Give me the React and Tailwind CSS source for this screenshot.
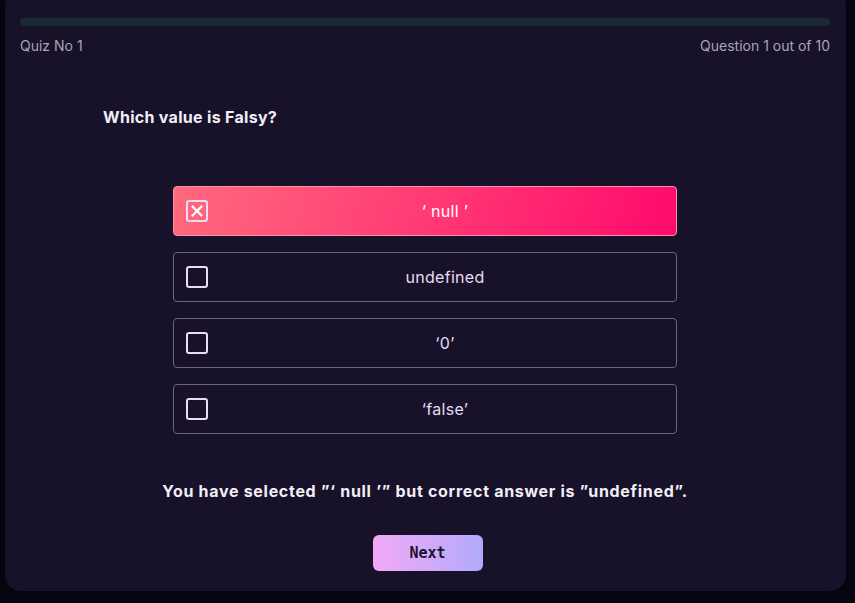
import React, { useState } from 'react';

const options = ["‘ null ’", 'undefined', '‘0’', '‘false’'];

function CheckBox({ checked }) {
  return (
    <span className="w-[22px] h-[22px] rounded-[3px] border-[2.5px] border-[#eadcfb] flex items-center justify-center shrink-0">
      {checked && (
        <svg viewBox="0 0 16 16" className="w-[14px] h-[14px]" fill="none" stroke="#ffffff" strokeWidth={2.6} strokeLinecap="square">
          <path d="M3 3l10 10M13 3L3 13" />
        </svg>
      )}
    </span>
  );
}

export default function App() {
  const [selected] = useState(0);

  return (
    <div className="w-[855px] h-[603px] bg-[#05050f] overflow-hidden" style={{ fontFamily: 'Inter, "Liberation Sans", sans-serif' }}>
      <div className="ml-[5px] w-[841px] mt-[-10px] h-[601px] bg-[#18112a] rounded-2xl pl-[15px] pr-[16px] pt-[28px] flex flex-col">
        <div className="h-2 rounded-full bg-[#1a2a33]"></div>
        <div className="flex justify-between mt-[10px] text-[14px] text-[#aaa4b4] leading-5">
          <span>Quiz No 1</span>
          <span>Question 1 out of 10</span>
        </div>

        <h1 className="mt-[49px] ml-[83px] text-[16px] font-bold text-[#f2eef6] leading-6 tracking-[0.3px]">Which value is Falsy?</h1>

        <div className="mt-[57px] w-[504px] mx-auto flex flex-col gap-4">
          {options.map((opt, i) => (
            <button
              key={opt}
              className={`h-[50px] rounded-[4px] border flex items-center pl-3 ${
                i === selected
                  ? 'bg-[linear-gradient(105deg,#ff6a7d,#ff0a6c)] border-[#ff8fa6]'
                  : 'bg-[#18112a] border-[#6e677c]'
              }`}
            >
              <CheckBox checked={i === selected} />
              <span className={`flex-1 ml-1.5 text-center text-[16px] tracking-[0.3px] ${i === selected ? 'text-white' : 'text-[#e6ddf3]'}`}>
                {opt}
              </span>
            </button>
          ))}
        </div>

        <p className="mt-[45px] text-center text-[16px] font-bold text-[#f2eef6] leading-6 tracking-[0.7px]">
          You have selected ”‘ null ’” but correct answer is ”undefined”.
        </p>

        <div className="flex justify-center mt-[32px] pl-[5px]">
          <button
            className="w-[110px] h-[36px] rounded-md bg-gradient-to-r from-[#f2a9f6] to-[#b1a9fc] text-[#1c1430] text-[15px] font-semibold"
            style={{ fontFamily: '"DejaVu Sans Mono", "Liberation Mono", monospace' }}
          >
            Next
          </button>
        </div>
      </div>
    </div>
  );
}
